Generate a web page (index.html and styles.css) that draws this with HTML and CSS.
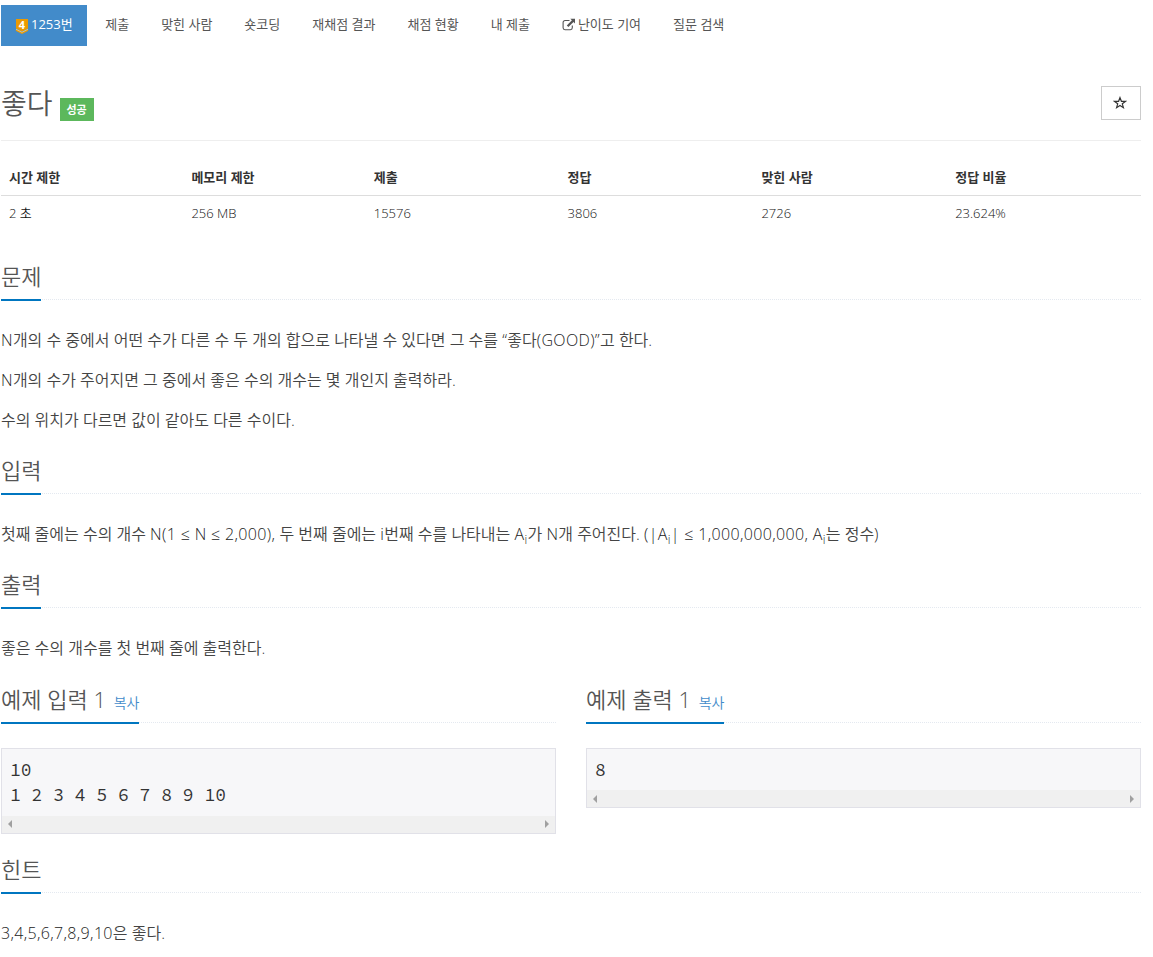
FILE: index.html
```html
<!DOCTYPE html>
<html lang="ko">
<head>
<meta charset="utf-8">
<title>1253번: 좋다</title>
<link rel="stylesheet" href="styles.css">
</head>
<body>
<main class="page">
  <nav class="menu">
    <a class="menu-item active"><svg class="tier" viewBox="0 0 12 15"><path fill="#ec9a00" d="M0 0h12v9.6L6 12.6 0 9.6z"/><path fill="none" stroke="#ec9a00" stroke-width="1.5" d="M0 11.2l6 3 6-3"/><path fill="none" stroke="#f8dca5" stroke-width=".7" d="M0 10.2l6 3 6-3"/><text class="tier-number" x="6" y="10" text-anchor="middle">4</text></svg><span>1253번</span></a>
    <a class="menu-item">제출</a>
    <a class="menu-item">맞힌 사람</a>
    <a class="menu-item">숏코딩</a>
    <a class="menu-item">재채점 결과</a>
    <a class="menu-item">채점 현황</a>
    <a class="menu-item">내 제출</a>
    <a class="menu-item"><svg class="external" viewBox="0 0 14 13"><path fill="none" stroke="#555" stroke-width="1.1" d="M7.5 2.5H3A1.9 1.9 0 0 0 1.1 4.4v5.4A1.9 1.9 0 0 0 3 11.7h5.4a1.9 1.9 0 0 0 1.9-1.9V7.5"/><path fill="#555" d="M8.3.7H13v4.7l-1.5-1.5-5.1 5.1-1.6-1.6 5.1-5.1z"/></svg><span>난이도 기여</span></a>
    <a class="menu-item">질문 검색</a>
  </nav>

  <header class="title-row">
    <h1 class="title">좋다</h1><span class="label">성공</span>
    <button class="favorite" aria-label="즐겨찾기"><svg class="star" viewBox="0 0 14 14"><path fill="none" stroke="#333" stroke-width="1.2" d="M7 1.6l1.4 3.7 4 .1-3.1 2.4 1.1 3.9L7 9.5l-3.4 2.2 1.1-3.9-3.1-2.4 4-.1z"/></svg></button>
  </header>

  <table class="info">
    <thead><tr><th class="narrow">시간 제한</th><th class="narrow">메모리 제한</th><th>제출</th><th>정답</th><th>맞힌 사람</th><th>정답 비율</th></tr></thead>
    <tbody><tr><td>2 초</td><td>256 MB</td><td>15576</td><td>3806</td><td>2726</td><td>23.624%</td></tr></tbody>
  </table>

  <section class="section">
    <div class="headline"><h2>문제</h2></div>
    <p><span class="latin">N</span>개의 수 중에서 어떤 수가 다른 수 두 개의 합으로 나타낼 수 있다면 그 수를 <span class="latin">“</span>좋다<span class="latin">(GOOD)”</span>고 한다.</p>
    <p><span class="latin">N</span>개의 수가 주어지면 그 중에서 좋은 수의 개수는 몇 개인지 출력하라.</p>
    <p>수의 위치가 다르면 값이 같아도 다른 수이다.</p>
  </section>
  <section class="section">
    <div class="headline"><h2>입력</h2></div>
    <p>첫째 줄에는 수의 개수 <span class="latin">N(1 ≤ N ≤ 2,000),</span> 두 번째 줄에는 <span class="latin">i</span>번째 수를 나타내는 <span class="latin">A<sub>i</sub></span>가 <span class="latin">N</span>개 주어진다. <span class="latin">(|A<sub>i</sub>| ≤ 1,000,000,000, A<sub>i</sub></span>는 정수<span class="latin">)</span></p>
  </section>
  <section class="section">
    <div class="headline"><h2>출력</h2></div>
    <p>좋은 수의 개수를 첫 번째 줄에 출력한다.</p>
  </section>

  <div class="samples">
    <section>
      <div class="headline"><h2>예제 입력 1 <a class="copy">복사</a></h2></div>
      <div class="sample"><pre>10
1 2 3 4 5 6 7 8 9 10</pre><div class="scrollbar"><i class="arrow left"></i><i class="arrow right"></i></div></div>
    </section>
    <section>
      <div class="headline"><h2>예제 출력 1 <a class="copy">복사</a></h2></div>
      <div class="sample"><pre>8</pre><div class="scrollbar"><i class="arrow left"></i><i class="arrow right"></i></div></div>
    </section>
  </div>

  <section class="section">
    <div class="headline"><h2>힌트</h2></div>
    <p><span class="latin">3,4,5,6,7,8,9,10</span>은 좋다.</p>
  </section>
</main>
</body>
</html>
```
FILE: styles.css
```css
* { box-sizing: border-box; }
body {
  margin: 0;
  background: #fff;
  color: #333;
  font: 13px/21px "Open Sans", "Noto Sans CJK KR", sans-serif;
  overflow: hidden;
}
.page { width: 1140px; margin-left: 1px; padding-top: 5px; }

.menu { display: flex; gap: 4px; height: 41px; }
.menu-item {
  display: flex;
  align-items: center;
  padding: 0 14px 2px;
  color: #555;
  white-space: nowrap;
}
.menu-item.active { background: #428bca; color: #fff; }
.tier { width: 12px; height: 15px; margin: 3px 3px 0 1px; overflow: visible; }
.active span { margin-right: .5px; }
.tier-number { font: bold 11px "Open Sans", sans-serif; fill: #fff; }
.external { width: 14px; height: 13px; margin-right: 2px; }

.title-row {
  display: flex;
  align-items: flex-start;
  height: 95px;
  padding-top: 40px;
  border-bottom: 1px solid #eee;
}
.title {
  margin: -4px 7px 0 0;
  color: #555;
  font-size: 28px;
  font-weight: 350;
  line-height: 42px;
}
.label {
  width: 34px;
  height: 23px;
  margin-top: 12px;
  background: #5cb85c;
  color: #fff;
  font-size: 11px;
  font-weight: 700;
  line-height: 23px;
  text-align: center;
}
.favorite {
  display: flex;
  align-items: center;
  justify-content: center;
  width: 40px;
  height: 34px;
  margin-left: auto;
  padding: 0 2px 1px 0;
  background: #fff;
  border: 1px solid #ccc;
}
.star { width: 14px; height: 14px; }

.info {
  width: 100%;
  margin-top: 19px;
  border-collapse: collapse;
  table-layout: fixed;
}
.info th, .info td { padding: 0 8px; text-align: left; }
.info th { width: 17%; height: 35px; border-bottom: 1px solid #ddd; }
.info .narrow { width: 16%; }
.info td { height: 36px; font-weight: 350; color: #111; }

.headline { height: 41px; border-bottom: 1px dotted #e4e9f0; }
.headline h2 {
  display: inline-block;
  height: 42px;
  margin: 0;
  border-bottom: 2px solid #0076c0;
  color: #555;
  font-size: 22px;
  font-weight: 350;
  line-height: 35px;
  white-space: nowrap;
}
.info + .section { margin-top: 28px; }
.section { margin-bottom: 18px; }
.section .headline { margin-bottom: 25px; }
.section p {
  height: 30px;
  margin: 0 0 10px;
  color: #444;
  font-size: 16px;
  font-weight: 350;
  line-height: 30px;
  white-space: nowrap;
}
.latin { color: #222; font-weight: 300; letter-spacing: .35px; }
.section sub {
  position: relative;
  bottom: -4px;
  font-size: 12px;
  line-height: 0;
  vertical-align: baseline;
}
.section p:last-child { margin-bottom: 0; }

.samples { display: grid; grid-template-columns: 555px 555px; gap: 30px; margin: 19px 0 18px; align-items: start; }
.samples .headline { margin-bottom: 25px; }
.copy { margin-left: 2px; color: #428bca; font-size: 14px; font-weight: 350; }
.sample { border: 1px solid #e1e1e8; background: #f7f7f9; }
.sample pre {
  margin: 0;
  padding: 7.5px 8px 8px;
  color: #333;
  font: 18px/25.5px "Source Code Pro", "Noto Sans Mono CJK KR", "Liberation Mono", monospace;
}
.scrollbar {
  display: flex;
  align-items: center;
  justify-content: space-between;
  height: 17px;
  padding: 0 6px;
  background: #f0f0f0;
}
.arrow { border: 4px solid transparent; }
.arrow.left { border-left-width: 0; border-right-color: #a0a0a0; }
.arrow.right { border-right-width: 0; border-left-color: #a0a0a0; }
```
